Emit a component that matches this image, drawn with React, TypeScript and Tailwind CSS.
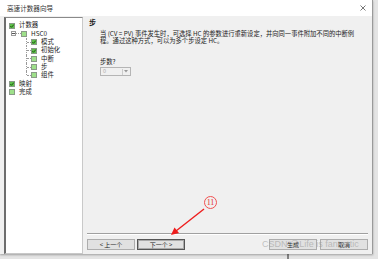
import React from "react";

const font = { fontFamily: '"Noto Sans CJK SC", "Noto Sans", sans-serif' };

function Box({ checked }: { checked: boolean }) {
  return (
    <svg width="6" height="6" viewBox="0 0 6 6" className="shrink-0">
      <rect x="0.5" y="0.5" width="5" height="5" fill={checked ? "#5fc04a" : "#9ee08a"} stroke="#8a9a88" strokeWidth="1" />
      {checked && <path d="M1.3 3 L2.5 4.3 L4.8 1.6" fill="none" stroke="#1d5a12" strokeWidth="1" />}
    </svg>
  );
}

type Item = { label: string; checked: boolean; level: number };

const items: Item[] = [
  { label: "计数器", checked: true, level: 0 },
  { label: "HSC0", checked: false, level: 1 },
  { label: "模式", checked: true, level: 2 },
  { label: "初始化", checked: true, level: 2 },
  { label: "中断", checked: false, level: 2 },
  { label: "步", checked: false, level: 2 },
  { label: "组件", checked: false, level: 2 },
  { label: "映射", checked: true, level: 0 },
  { label: "完成", checked: false, level: 0 },
];

function TreeRow({ item, last }: { item: Item; last: boolean }) {
  return (
    <div className="relative flex h-[8.3px] items-center">
      {item.level === 0 && <div className="ml-[3px]"><Box checked={item.checked} /></div>}
      {item.level === 1 && (
        <>
          <div className="ml-[5px] flex h-[5px] w-[5px] items-center justify-center border border-[#9a9a9a] bg-white">
            <div className="h-px w-[3px] bg-[#555]" />
          </div>
          <div className="h-0 w-[5px] border-t border-dotted border-[#999]" />
          <Box checked={item.checked} />
        </>
      )}
      {item.level === 2 && (
        <>
          <div className={`absolute left-[20px] top-0 w-0 border-l border-dotted border-[#999] ${last ? "h-1/2" : "h-full"}`} />
          <div className="ml-[21px] h-0 w-[4px] border-t border-dotted border-[#999]" />
          <Box checked={item.checked} />
        </>
      )}
      <span className={`whitespace-nowrap text-[6.4px] leading-none text-[#222] ${item.level === 1 ? "ml-[4px] text-[5.5px]" : "ml-[4px]"}`}>
        {item.label}
      </span>
    </div>
  );
}

function Btn({ children, focused }: { children: React.ReactNode; focused?: boolean }) {
  return (
    <div
      className={`flex h-[11px] w-[48px] items-center justify-center bg-[#e1e1e1] text-[6px] leading-none text-[#222] ${
        focused ? "border border-[#555] shadow-[inset_0_0_0_1px_#aaa]" : "border border-[#adadad]"
      }`}
    >
      {children}
    </div>
  );
}

export default function App() {
  return (
    <div className="relative h-[259px] w-[378px] overflow-hidden bg-[#e4e4e4]" style={font}>
      <div className="flex h-[254px] w-[373px] flex-col border-r border-[#9a9a9a] shadow-[0_1px_2px_rgba(0,0,0,0.3)]">
        {/* title bar */}
        <div className="flex h-[16px] shrink-0 items-center justify-between bg-white pl-[7px] pr-[6px]">
          <span className="text-[6.6px] leading-none text-[#333]">高速计数器向导</span>
          <svg width="6" height="6" viewBox="0 0 6 6">
            <path d="M0.5 0.5 L5.5 5.5 M5.5 0.5 L0.5 5.5" stroke="#555" strokeWidth="0.8" />
          </svg>
        </div>

        {/* body */}
        <div className="flex flex-1 bg-[#f0f0f0] pt-[1px]">
          {/* tree */}
          <div className="ml-[4px] w-[79px] border-b border-l-2 border-r border-t border-b-[#c8c8c8] border-l-[#6d6d6d] border-r-[#c9c9c9] border-t-[#8a8a8a] bg-white pt-[3.5px]">
            {items.map((it, i) => (
              <TreeRow key={i} item={it} last={it.label === "组件"} />
            ))}
          </div>

          {/* right column */}
          <div className="flex flex-1 flex-col">
            <div className="flex-1 pl-[6px] pt-[1px]">
              <div className="text-[7px] font-bold leading-[9px] text-[#222]">步</div>
              <p className="mt-[2.5px] pl-[11px] text-[6.3px] leading-[7px] text-[#222]">
                当 (CV = PV) 事件发生时，可选择 HC 的参数进行重新设定，并向同一事件附加不同的中断例
                <br />
                程。通过这种方式，可以为多个步设定 HC。
              </p>
              <div className="mt-[14.5px] pl-[11px] text-[6.3px] leading-[8px] text-[#222]">步数?</div>
              <div className="ml-[11px] mt-[1px] flex h-[9px] w-[31px] items-center justify-between border border-[#b5b5b5] bg-[#f0f0f0] pl-[2px] pr-[1px]">
                <span className="text-[5.5px] leading-none text-[#aaa]">0</span>
                <div className="flex h-[6px] w-[7px] items-center justify-center border-l border-[#ccc]">
                  <svg width="4" height="3" viewBox="0 0 4 3">
                    <path d="M0 0 L4 0 L2 2.5 Z" fill="#999" />
                  </svg>
                </div>
              </div>
            </div>
            <div className="ml-[4px] mr-[4px] h-0 border-t border-b border-t-[#a0a0a0] border-b-white" />
            <div className="flex items-center pb-[4px] pl-[4px] pr-[4px] pt-[4px]">
              <Btn>&lt; 上一个</Btn>
              <div className="ml-[2px]">
                <Btn focused>下一个 &gt;</Btn>
              </div>
              <div className="flex-1" />
              <Btn>生成</Btn>
              <div className="ml-[3px]">
                <Btn>取消</Btn>
              </div>
            </div>
          </div>
        </div>
      </div>

      {/* annotation: circled number and arrow */}
      <div className="absolute left-[204px] top-[196px] flex h-[13px] w-[13px] items-center justify-center rounded-full border border-[#f05050] text-[8px] leading-none text-[#e03030]" style={{ fontFamily: '"Liberation Serif", serif' }}>
        11
      </div>
      <svg className="absolute left-0 top-0" width="378" height="259" viewBox="0 0 378 259">
        <path d="M204 209 L176 231" stroke="#ee1c1c" strokeWidth="1.4" />
        <path d="M171 235 L174.5 227.5 L179 233 Z" fill="#ee1c1c" />
        <path d="M288 254 L288 259" stroke="#222" strokeWidth="1" />
      </svg>

      {/* watermark */}
      <div className="absolute left-[262px] top-[240px] whitespace-nowrap text-[9px] leading-none text-[rgba(150,150,150,0.55)]" style={{ fontFamily: '"Liberation Sans", sans-serif' }}>
        CSDN @Life is fantastic
      </div>
    </div>
  );
}
